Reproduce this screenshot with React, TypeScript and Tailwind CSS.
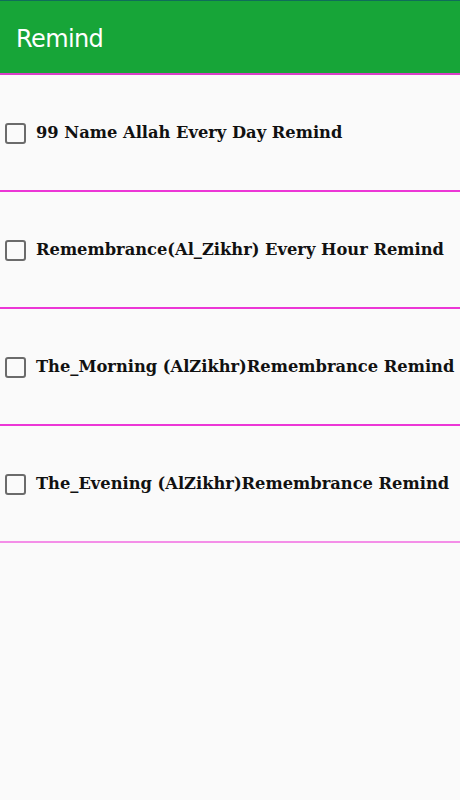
import React from "react";

const items = [
  "99 Name Allah Every Day Remind",
  "Remembrance(Al_Zikhr) Every Hour Remind",
  "The_Morning (AlZikhr)Remembrance Remind",
  "The_Evening (AlZikhr)Remembrance Remind",
];

export default function App() {
  return (
    <div className="w-[460px] h-[800px] bg-[#fafafa] overflow-hidden">
      <div className="h-[73px] bg-[#17a538] border-t border-[#0f6e5a] flex items-center px-[16px] pt-[3px]">
        <span className="text-white text-[24px] font-['DejaVu_Sans',sans-serif] tracking-tight">
          Remind
        </span>
      </div>
      <div className="h-[2px] bg-[#d93fc8]" />
      {items.map((label, i) => (
        <div key={i}>
          <div className="h-[115px] flex items-center pt-[2px]">
            <div className="ml-[5px] w-[21px] h-[21px] border-2 border-[#6b6b6b] rounded-[3px] shrink-0" />
            <span className="ml-[10px] whitespace-nowrap font-bold text-[16.3px] text-[#111] font-['DejaVu_Serif',serif]">
              {label}
            </span>
          </div>
          {i === items.length - 1 ? (
            <div className="h-[2px] bg-[#f48ee8]" />
          ) : (
            <div className="h-[2px] bg-[#ec37d6]" />
          )}
        </div>
      ))}
    </div>
  );
}
